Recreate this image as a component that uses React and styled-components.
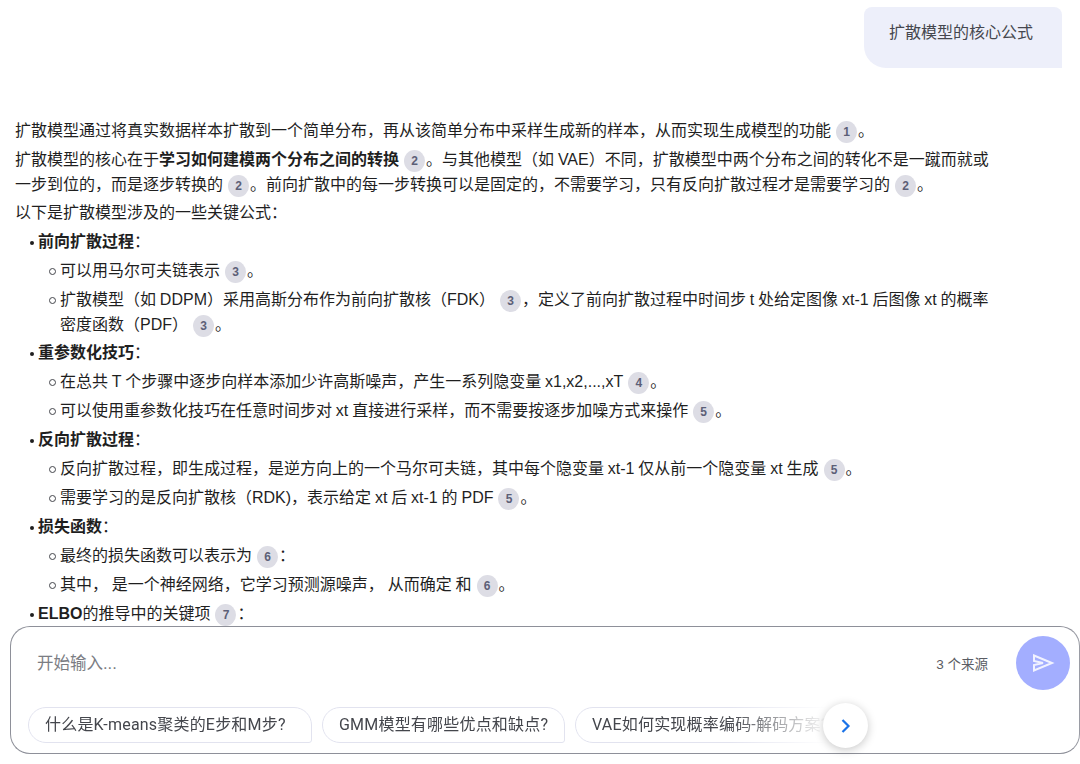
import React from 'react';
import styled, { createGlobalStyle } from 'styled-components';

const Global = createGlobalStyle`
  html, body { margin: 0; padding: 0; background: #fff; }
  body { font-family: "Liberation Sans", "Noto Sans CJK SC", sans-serif; color: #1f1f1f; }
`;
const Page = styled.div`
  width: 1080px; height: 764px; display: flex; flex-direction: column; overflow: hidden; background: #fff;
`;
const Scroll = styled.div`
  height: 626px; flex: none; overflow: hidden; padding: 7px 18px 0 15px; box-sizing: border-box;
  display: flex; flex-direction: column;
`;
const Bubble = styled.div`
  align-self: flex-end; width: 198px; height: 62px; box-sizing: border-box; padding: 14px 0 0 25px;
  background: #edeffa; color: #45474e; font-size: 16px; line-height: 24px;
  border-radius: 8px 8px 0 22px;
`;
const Answer = styled.div`
  margin-top: 51px; width: 985px; font-size: 16px; line-height: 24.5px; word-spacing: -.6px;
  display: flex; flex-direction: column; gap: 4.4px;
`;
const Para = styled.p`margin: 0;`;
const Cite = styled.span`
  display: inline-block; width: 21px; height: 22px; text-align: center;
  border-radius: 50%; background: #dddde5; color: #5c5f77; font: 700 12px/22px "Liberation Sans", sans-serif;
  margin: -4px 1px -4px 5px; vertical-align: 0;
`;
const Strong = styled.b`font-weight: 700;`;
const Row = styled.div`
  display: flex; padding-left: ${p => p.$nested ? 34 : 15}px;
`;
const Dot = styled.span`
  flex: none; width: 4px; height: 4px; border-radius: 50%; background: #1f1f1f; margin: 11px 4px 0 0;
`;
const Ring = styled.span`
  flex: none; width: 7px; height: 7px; box-sizing: border-box; border-radius: 50%; border: 1px solid #44464c;
  margin: 9px 4px 0 0;
`;
const Body = styled.div`flex: 1;`;
const Composer = styled.div`
  flex: none; width: 1070px; height: 128px; margin-left: 10px; box-sizing: border-box;
  border: 1px solid #8e9099; border-right-color: #9a9ca4; border-radius: 20px; position: relative;
  display: flex; flex-direction: column; padding: 0 9px 10px 17px;
`;
const InputRow = styled.div`
  display: flex; align-items: center; height: 54px; margin: 9px 0 18px; flex: none;
`;
const Placeholder = styled.span`
  font-size: 16.5px; color: #7b7d83; flex: 1; padding-left: 9px; margin-top: -2px;
`;
const Sources = styled.span`
  font-size: 13.5px; color: #5a5c63; margin-right: 28px; margin-top: -1px;
`;
const Send = styled.button`
  width: 54px; height: 54px; border: 0; padding: 0; border-radius: 50%; background: #a3aeff;
  display: flex; align-items: center; justify-content: center;
`;
const Chips = styled.div`
  display: flex; gap: 10px; width: 822px; height: 36px; overflow: hidden; margin-top: -1px;
  mask-image: linear-gradient(to right, #000 700px, transparent 800px);
`;
const Chip = styled.div`
  flex: none; width: ${p => p.$width}px; height: 36px; box-sizing: border-box; padding: 0 0 0 16px; display: flex; align-items: center;
  border: 1px solid #e2e3ef; border-radius: 18px 18px 3px 18px; font: 16px/20px Roboto, "Noto Sans CJK SC", sans-serif;
  letter-spacing: .2px; color: #44464c; white-space: nowrap;
`;
const Next = styled.button`
  position: absolute; left: 812px; top: 76px; width: 45px; height: 45px; border: 0; border-radius: 50%;
  background: #fff; box-shadow: 0 2px 10px rgba(0,0,0,.22); display: flex; align-items: center; justify-content: center; padding: 0;
`;

const C = ({ n }) => <Cite>{n}</Cite>;
const Item = ({ nested, children }) => (
  <Row $nested={nested}>{nested ? <Ring /> : <Dot />}<Body>{children}</Body></Row>
);

export default function App() {
  return (
    <Page>
      <Global />
      <Scroll>
        <Bubble>扩散模型的核心公式</Bubble>
        <Answer>
          <Para>扩散模型通过将真实数据样本扩散到一个简单分布，再从该简单分布中采样生成新的样本，从而实现生成模型的功能<C n="1" />。</Para>
          <Para>扩散模型的核心在于<Strong>学习如何建模两个分布之间的转换</Strong><C n="2" />。与其他模型（如 VAE）不同，扩散模型中两个分布之间的转化不是一蹴而就或一步到位的，而是逐步转换的<C n="2" />。前向扩散中的每一步转换可以是固定的，不需要学习，只有反向扩散过程才是需要学习的<C n="2" />。</Para>
          <Para>以下是扩散模型涉及的一些关键公式：</Para>
          <Item><Strong>前向扩散过程</Strong>：</Item>
          <Item nested>可以用马尔可夫链表示<C n="3" />。</Item>
          <Item nested>扩散模型（如 DDPM）采用高斯分布作为前向扩散核（FDK）<C n="3" />，定义了前向扩散过程中时间步 t 处给定图像 xt-1 后图像 xt 的概率密度函数（PDF）<C n="3" />。</Item>
          <Item><Strong>重参数化技巧</Strong>：</Item>
          <Item nested>在总共 T 个步骤中逐步向样本添加少许高斯噪声，产生一系列隐变量 x1,x2,...,xT<C n="4" />。</Item>
          <Item nested>可以使用重参数化技巧在任意时间步对 xt 直接进行采样，而不需要按逐步加噪方式来操作<C n="5" />。</Item>
          <Item><Strong>反向扩散过程</Strong>：</Item>
          <Item nested>反向扩散过程，即生成过程，是逆方向上的一个马尔可夫链，其中每个隐变量 xt-1 仅从前一个隐变量 xt 生成<C n="5" />。</Item>
          <Item nested>需要学习的是反向扩散核（RDK)，表示给定 xt 后 xt-1 的 PDF<C n="5" />。</Item>
          <Item><Strong>损失函数</Strong>：</Item>
          <Item nested>最终的损失函数可以表示为<C n="6" />：</Item>
          <Item nested>其中， 是一个神经网络，它学习预测源噪声， 从而确定 和<C n="6" />。</Item>
          <Item><Strong>ELBO</Strong>的推导中的关键项<C n="7" />：</Item>
        </Answer>
      </Scroll>
      <Composer>
        <InputRow>
          <Placeholder>开始输入...</Placeholder>
          <Sources>3 个来源</Sources>
          <Send aria-label="发送">
            <svg width="24" height="24" viewBox="0 0 24 24" fill="none" stroke="#fff" strokeWidth="2" strokeLinejoin="miter" opacity=".85">
              <path d="M3 4.5 21 12 3 19.5V14l9-2-9-2Z" />
            </svg>
          </Send>
        </InputRow>
        <Chips>
          <Chip $width={284}>什么是K-means聚类的E步和M步?</Chip>
          <Chip $width={243}>GMM模型有哪些优点和缺点?</Chip>
          <Chip $width={300}>VAE如何实现概率编码-解码方案?</Chip>
        </Chips>
        <Next aria-label="下一个">
          <svg width="20" height="20" viewBox="0 0 20 20" fill="none" stroke="#1a73e8" strokeWidth="2.2"><path d="m6.5 4 6 6-6 6" /></svg>
        </Next>
      </Composer>
    </Page>
  );
}
